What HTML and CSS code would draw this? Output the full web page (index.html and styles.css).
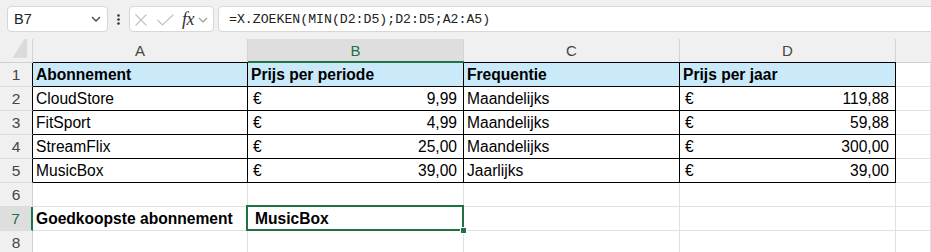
FILE: index.html
```html
<!DOCTYPE html>
<html lang="nl">
  <head>
    <meta charset="utf-8">
    <title>Abonnementen</title>
    <link rel="stylesheet" href="styles.css">
  </head>
  <body>
    <div class="toolbar">
      <div class="namebox">
        <span>B7</span>
        <svg class="chev" width="10" height="6" viewBox="0 0 10 6"><path d="M1 1 L5 5 L9 1" fill="none" stroke="#444" stroke-width="1.3"/></svg>
      </div>
      <svg class="dots" width="21" height="26" viewBox="0 0 21 26">
        <circle cx="10.5" cy="9.5" r="1.3" fill="#333"/>
        <circle cx="10.5" cy="13.5" r="1.3" fill="#333"/>
        <circle cx="10.5" cy="17.5" r="1.3" fill="#333"/>
      </svg>
      <div class="fnbox">
        <svg class="cancel" width="12" height="12" viewBox="0 0 12 12"><path d="M0.5 0.5 L11.5 11.5 M11.5 0.5 L0.5 11.5" stroke="#c2c2c2" stroke-width="1.2"/></svg>
        <svg class="enter" width="17" height="12" viewBox="0 0 17 12"><path d="M0.5 6 L5.5 11 L16.5 0.5" fill="none" stroke="#c2c2c2" stroke-width="1.2"/></svg>
        <span class="fx">fx</span>
        <svg class="chev2" width="10" height="6" viewBox="0 0 10 6"><path d="M1 1 L5 5 L9 1" fill="none" stroke="#9a9a9a" stroke-width="1.2"/></svg>
      </div>
      <div class="formula">=X.ZOEKEN(MIN(D2:D5);D2:D5;A2:A5)</div>
    </div>

    <div class="sheet">
      <div class="h corner"><div class="hl"><svg width="33" height="24" viewBox="0 0 33 24"><polygon points="28,-5 28,19 13,19" fill="#dadada"/></svg></div></div>
      <div class="h hb"><div class="hl">A</div></div>
      <div class="h hb hsel"><div class="hl">B</div></div>
      <div class="h hb"><div class="hl">C</div></div>
      <div class="h hb"><div class="hl">D</div></div>
      <div class="h"><div class="hl last"></div></div>

      <div class="r rb">1</div>
      <div class="c t th">Abonnement</div>
      <div class="c t th">Prijs per periode</div>
      <div class="c t th">Frequentie</div>
      <div class="c t th">Prijs per jaar</div>
      <div class="c"></div>

      <div class="r rb">2</div>
      <div class="c t">CloudStore</div>
      <div class="c t acc"><span>€</span><span>9,99</span></div>
      <div class="c t">Maandelijks</div>
      <div class="c t acc"><span>€</span><span>119,88</span></div>
      <div class="c"></div>

      <div class="r rb">3</div>
      <div class="c t">FitSport</div>
      <div class="c t acc"><span>€</span><span>4,99</span></div>
      <div class="c t">Maandelijks</div>
      <div class="c t acc"><span>€</span><span>59,88</span></div>
      <div class="c"></div>

      <div class="r rb">4</div>
      <div class="c t">StreamFlix</div>
      <div class="c t acc"><span>€</span><span>25,00</span></div>
      <div class="c t">Maandelijks</div>
      <div class="c t acc"><span>€</span><span>300,00</span></div>
      <div class="c"></div>

      <div class="r rb">5</div>
      <div class="c t">MusicBox</div>
      <div class="c t acc"><span>€</span><span>39,00</span></div>
      <div class="c t">Jaarlijks</div>
      <div class="c t acc"><span>€</span><span>39,00</span></div>
      <div class="c"></div>

      <div class="r">6</div>
      <div class="c"></div>
      <div class="c"></div>
      <div class="c"></div>
      <div class="c"></div>
      <div class="c"></div>

      <div class="r rsel">7</div>
      <div class="c bold">Goedkoopste abonnement</div>
      <div class="c bold sel">MusicBox</div>
      <div class="c"></div>
      <div class="c"></div>
      <div class="c"></div>

      <div class="r">8</div>
      <div class="c"></div>
      <div class="c"></div>
      <div class="c"></div>
      <div class="c"></div>
      <div class="c"></div>
    </div>
  </body>
</html>
```

FILE: styles.css
```css
body{
  margin : 0;
  background : #f0f0f0;
  font-family : "Liberation Sans", Arial, sans-serif;
  overflow : hidden;
}
.toolbar{
  height : 32px;
  box-sizing : border-box;
  padding : 6px 0 0 7px;
  display : flex;
  align-items : flex-start;
}
.namebox, .fnbox, .formula{
  height : 26px;
  box-sizing : border-box;
  background : white;
  border : 1px solid #d6d6d6;
  border-radius : 4px;
  display : flex;
  align-items : center;
}
.namebox{
  width : 101px;
  padding : 0 6px 0 6px;
  justify-content : space-between;
  font-size : 14.5px;
  color : #222;
}
.fnbox{
  width : 85px;
  padding-left : 5px;
}
.cancel{ margin-top : 2px; }
.enter{ margin-left : 10px; margin-top : 2px; }
.fx{
  font-family : "Liberation Serif", "Times New Roman", serif;
  font-style : italic;
  font-size : 18px;
  color : #333;
  margin-left : 8px;
  letter-spacing : -0.5px;
}
.chev2{ margin-left : 4px; margin-top : 1px; }
.formula{
  flex : 1;
  margin-left : 4px;
  margin-right : -8px;
  padding-left : 10px;
  font-family : "Liberation Mono", "Courier New", monospace;
  font-size : 13.2px;
  color : #222;
}

.sheet{
  display : grid;
  grid-template-columns : 33px 215px 216px 216px 216px 1fr;
  grid-template-rows : 31px repeat(8, 24px);
}
.h{
  padding-top : 7px;
  border-bottom : 1px solid #d0d0d0;
}
.hl{
  height : 100%;
  box-sizing : border-box;
  border-right : 1px solid #d4d4d4;
  display : flex;
  align-items : center;
  justify-content : center;
  font-size : 15px;
  color : #444;
}
.corner .hl svg{ display : block; }
.hl.last{ border-right : none; }
.hb{ border-bottom-color : #000; }
.hsel{ border-bottom : 2px solid #1f7244; }
.hsel .hl{
  background : #dedede;
  color : #1f7244;
}

.r{
  background : #f0f0f0;
  border-right : 1px solid #d0d0d0;
  border-bottom : 1px solid #dcdcdc;
  display : flex;
  align-items : center;
  justify-content : center;
  font-size : 15.5px;
  color : #444;
}
.rb{ border-right-color : #000; }
.rsel{
  background : #dedede;
  border-right : 2px solid #1f7244;
  color : #1f7244;
}
.c{
  background : white;
  border-right : 1px solid #e1e1e1;
  border-bottom : 1px solid #e1e1e1;
  display : flex;
  align-items : center;
  padding : 1px 3px 0 3px;
  font-size : 15.6px;
  color : #000;
  white-space : nowrap;
}
.t{
  border-right-color : #000;
  border-bottom-color : #000;
}
.th{
  background : #caeaf9;
  font-weight : bold;
}
.bold{ font-weight : bold; }
.acc{
  justify-content : space-between;
  padding : 1px 6px 0 5px;
}
.sel{
  position : relative;
  padding-left : 7px;
}
/* selectiekader met vulgreep */
.sel::before{
  content : "";
  position : absolute;
  left : -2px;
  top : -2px;
  right : -1px;
  bottom : -1px;
  border : 2px solid #1f7244;
}
.sel::after{
  content : "";
  position : absolute;
  left : 212px;
  top : 20px;
  width : 5px;
  height : 5px;
  background : #1f7244;
  border : 1px solid white;
}
```
